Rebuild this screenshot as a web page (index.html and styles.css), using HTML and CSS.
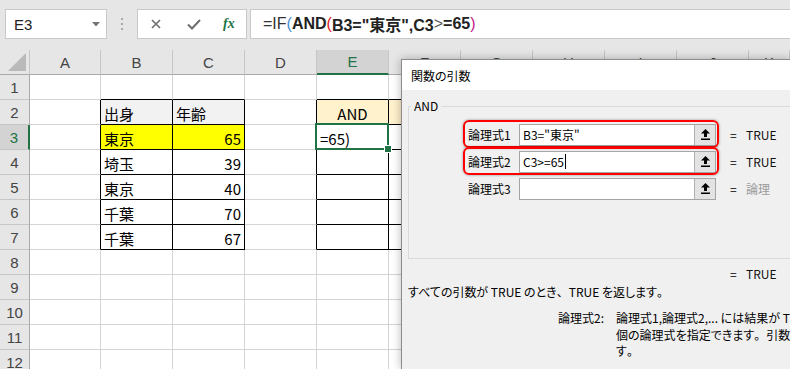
FILE: index.html
```html
<!DOCTYPE html>
<html lang="ja">
<head>
<meta charset="utf-8">
<title>関数の引数</title>
<link rel="stylesheet" href="styles.css">
</head>
<body>
<div class="topbar">
  <div class="namebox"><span>E3</span><svg class="caret" width="8" height="5" viewBox="0 0 8 5"><path d="M0 0H8L4 4.5Z" fill="#767676"/></svg></div>
  <div class="grip"><i></i><i></i><i></i></div>
  <div class="fxbtns">
    <svg class="ico-x" width="10" height="10" viewBox="0 0 10 10"><path d="M1 1L9 9M9 1L1 9" stroke="#6e6e6e" stroke-width="1.6" fill="none"/></svg>
    <svg class="ico-ok" width="14" height="11" viewBox="0 0 14 11"><path d="M1 5.5L5 9.5L13 1" stroke="#6e6e6e" stroke-width="2" fill="none"/></svg>
    <span class="fx">fx</span>
  </div>
  <div class="formula">=IF<span class="p1">(</span><b>AND</b><span class="p2">(</span><b>B3="東京",C3</b><span class="op">&gt;</span><b>=65</b><span class="p3">)</span></div>
</div>

<div class="sheet">
  <div class="c ch corner"><svg width="18" height="18" viewBox="0 0 18 18"><path d="M18 0V18H0Z" fill="#b9b9b9"/></svg></div>
  <div class="c ch">A</div><div class="c ch">B</div><div class="c ch">C</div><div class="c ch">D</div><div class="c ch sel-ch">E</div><div class="c ch">F</div><div class="c ch">G</div><div class="c ch">H</div><div class="c ch">I</div><div class="c ch">J</div><div class="c ch">K</div>

  <div class="c rh">1</div>
  <div class="c"></div><div class="c bb"></div><div class="c bb"></div><div class="c"></div><div class="c bb"></div><div class="c bb"></div><div class="c"></div><div class="c"></div><div class="c"></div><div class="c"></div><div class="c"></div>

  <div class="c rh">2</div>
  <div class="c br"></div><div class="c br bb gh">出身</div><div class="c br bb gh">年齢</div><div class="c br"></div><div class="c br bb or mid">AND</div><div class="c br bb or"></div><div class="c"></div><div class="c"></div><div class="c"></div><div class="c"></div><div class="c"></div>

  <div class="c rh sel-rh">3</div>
  <div class="c br"></div><div class="c br bb yl">東京</div><div class="c br bb yl num">65</div><div class="c br"></div><div class="c br bb active">=65)</div><div class="c br bb"></div><div class="c"></div><div class="c"></div><div class="c"></div><div class="c"></div><div class="c"></div>

  <div class="c rh">4</div>
  <div class="c br"></div><div class="c br bb">埼玉</div><div class="c br bb num">39</div><div class="c br"></div><div class="c br bb"></div><div class="c br bb"></div><div class="c"></div><div class="c"></div><div class="c"></div><div class="c"></div><div class="c"></div>

  <div class="c rh">5</div>
  <div class="c br"></div><div class="c br bb">東京</div><div class="c br bb num">40</div><div class="c br"></div><div class="c br bb"></div><div class="c br bb"></div><div class="c"></div><div class="c"></div><div class="c"></div><div class="c"></div><div class="c"></div>

  <div class="c rh">6</div>
  <div class="c br"></div><div class="c br bb">千葉</div><div class="c br bb num">70</div><div class="c br"></div><div class="c br bb"></div><div class="c br bb"></div><div class="c"></div><div class="c"></div><div class="c"></div><div class="c"></div><div class="c"></div>

  <div class="c rh">7</div>
  <div class="c br"></div><div class="c br bb">千葉</div><div class="c br bb num">67</div><div class="c br"></div><div class="c br bb"></div><div class="c br bb"></div><div class="c"></div><div class="c"></div><div class="c"></div><div class="c"></div><div class="c"></div>

  <div class="c rh">8</div>
  <div class="c"></div><div class="c"></div><div class="c"></div><div class="c"></div><div class="c"></div><div class="c"></div><div class="c"></div><div class="c"></div><div class="c"></div><div class="c"></div><div class="c"></div>
  <div class="c rh">9</div>
  <div class="c"></div><div class="c"></div><div class="c"></div><div class="c"></div><div class="c"></div><div class="c"></div><div class="c"></div><div class="c"></div><div class="c"></div><div class="c"></div><div class="c"></div>
  <div class="c rh">10</div>
  <div class="c"></div><div class="c"></div><div class="c"></div><div class="c"></div><div class="c"></div><div class="c"></div><div class="c"></div><div class="c"></div><div class="c"></div><div class="c"></div><div class="c"></div>
  <div class="c rh">11</div>
  <div class="c"></div><div class="c"></div><div class="c"></div><div class="c"></div><div class="c"></div><div class="c"></div><div class="c"></div><div class="c"></div><div class="c"></div><div class="c"></div><div class="c"></div>
  <div class="c rh">12</div>
  <div class="c"></div><div class="c"></div><div class="c"></div><div class="c"></div><div class="c"></div><div class="c"></div><div class="c"></div><div class="c"></div><div class="c"></div><div class="c"></div><div class="c"></div>
</div>

<div class="dialog">
  <div class="dtitle">関数の引数</div>
  <div class="dbody">
    <fieldset class="group">
      <legend>AND</legend>
      <div class="arg">
        <div class="argbox hl">
          <span class="lbl">論理式1</span>
          <div class="field"><span class="val">B3="東京"</span><span class="ref"><svg width="9" height="11" viewBox="0 0 9 11"><path d="M4.5 0L9 4.5H6V8H3V4.5H0Z" fill="#000"/><rect x="0" y="9.5" width="9" height="1.5" fill="#000"/></svg></span></div>
        </div>
        <span class="eq">=</span><span class="res">TRUE</span>
      </div>
      <div class="arg">
        <div class="argbox hl">
          <span class="lbl">論理式2</span>
          <div class="field"><span class="val">C3&gt;=65<i class="caretline"></i></span><span class="ref"><svg width="9" height="11" viewBox="0 0 9 11"><path d="M4.5 0L9 4.5H6V8H3V4.5H0Z" fill="#000"/><rect x="0" y="9.5" width="9" height="1.5" fill="#000"/></svg></span></div>
        </div>
        <span class="eq">=</span><span class="res">TRUE</span>
      </div>
      <div class="arg">
        <div class="argbox">
          <span class="lbl">論理式3</span>
          <div class="field"><span class="val"></span><span class="ref"><svg width="9" height="11" viewBox="0 0 9 11"><path d="M4.5 0L9 4.5H6V8H3V4.5H0Z" fill="#000"/><rect x="0" y="9.5" width="9" height="1.5" fill="#000"/></svg></span></div>
        </div>
        <span class="eq">=</span><span class="res hint">論理</span>
      </div>
    </fieldset>
    <div class="result"><span class="eq">=</span><span class="res">TRUE</span></div>
    <p class="desc">すべての引数が TRUE のとき<span class="fw">、</span>TRUE を返します<span class="fw">。</span></p>
    <div class="help">
      <span class="hlabel">論理式2:</span>
      <p class="htext">論理式1,論理式2,... には結果が TRUE または FALSE になる<span class="fw">、</span>1 ～ 255<br>個の論理式を指定できます<span class="fw">。</span>引数には論理値<span class="fw">、</span>配列<span class="fw">、</span>または参照を指定しま<br>す<span class="fw">。</span></p>
    </div>
  </div>
</div>
</body>
</html>
```

FILE: styles.css
```css
* { box-sizing: border-box; margin: 0; padding: 0; }
html, body { width: 790px; height: 369px; overflow: hidden; }
body {
  background: #e6e6e6;
  font-family: "Noto Sans CJK JP", sans-serif;
  position: relative;
  color: #000;
}

/* formula bar */
.topbar {
  height: 50px;
  display: flex;
  align-items: flex-start;
  padding: 9px 0 0 5px;
  overflow: hidden;
}
.namebox {
  width: 102px;
  height: 30px;
  background: #fff;
  border: 1px solid #c8c8c8;
  display: flex;
  align-items: center;
  justify-content: space-between;
  padding: 0 6px 0 8px;
  font: 15px "Liberation Sans", sans-serif;
  color: #222;
  flex-shrink: 0;
}
.grip {
  width: 30px;
  height: 30px;
  display: flex;
  flex-direction: column;
  align-items: center;
  justify-content: center;
  gap: 3px;
  flex-shrink: 0;
}
.grip i { width: 2px; height: 2px; background: #a8a8a8; display: block; }
.fxbtns {
  width: 110px;
  height: 30px;
  background: #fff;
  border: 1px solid #c8c8c8;
  display: flex;
  align-items: center;
  padding-left: 13px;
  flex-shrink: 0;
}
.ico-ok { margin-left: 26px; }
.fx {
  margin-left: 22px;
  font: italic bold 14px "Liberation Serif", serif;
  color: #217346;
}
.formula {
  flex: 1;
  margin-left: 3px;
  height: 30px;
  background: #fff;
  border: 1px solid #c8c8c8;
  border-right: none;
  display: flex;
  align-items: center;
  padding-left: 12px;
  font: 16px "Liberation Sans", "Noto Sans CJK JP", sans-serif;
  color: #333;
  white-space: nowrap;
}
.formula b { font-weight: bold; color: #222; }
.formula .p1 { color: #4a8fd4; }
.formula .p2 { color: #e0201b; }
.formula .p3 { color: #c0208a; }
.formula .op { color: #555; }

/* sheet */
.sheet {
  display: grid;
  grid-template-columns: 30px 71px repeat(9, 72px) 41px;
  grid-auto-rows: 25px;
  width: 790px;
  height: 319px;
  overflow: hidden;
  background: #fff;
}
.c {
  border-right: 1px solid #d4d4d4;
  border-bottom: 1px solid #d4d4d4;
  font-size: 15px;
  padding: 2px 3px 0;
  display: flex;
  align-items: center;
  white-space: nowrap;
  position: relative;
  color: #000;
}
.ch {
  background: #e6e6e6;
  border-right-color: #c6c6c6;
  border-bottom-color: #a9a9a9;
  justify-content: center;
  color: #444;
  font: 15px "Liberation Sans", sans-serif;
  padding: 0;
}
.corner { justify-content: flex-end; align-items: flex-end; padding: 0 3px 3px 0; }
.rh {
  background: #e6e6e6;
  border-right-color: #a9a9a9;
  border-bottom-color: #c6c6c6;
  justify-content: center;
  color: #444;
  font: 15px "Liberation Sans", sans-serif;
  padding: 0;
}
.sel-ch { background: #d3d3d3; color: #217346; border-bottom: 2px solid #217346; }
.sel-rh { background: #d3d3d3; color: #217346; border-right: 2px solid #217346; }
.bb { border-bottom-color: #000; }
.br { border-right-color: #000; }
.gh { background: #f2f2f2; }
.yl { background: #ffff00; }
.or { background: #fff2cc; }
.num { justify-content: flex-end; }
.mid { justify-content: center; }
.active::after {
  content: "";
  position: absolute;
  left: -2px; top: -2px; right: -1px; bottom: -1px;
  border: 2px solid #217346;
  z-index: 1;
}
.active::before {
  content: "";
  position: absolute;
  right: -4px; bottom: -4px;
  width: 6px; height: 6px;
  background: #217346;
  border: 1px solid #fff;
  z-index: 2;
}

/* dialog */
.dialog {
  position: absolute;
  left: 401px;
  top: 59px;
  width: 389px;
  height: 310px;
  overflow: hidden;
  background: #f0f0f0;
  border: 1px solid #8c8c8c;
  border-right: none;
  border-bottom: none;
  box-shadow: 0 0 9px rgba(0, 0, 0, 0.28);
  font-size: 12px;
  font-feature-settings: "palt";
  z-index: 5;
}
.fw { font-feature-settings: normal; }
.dtitle {
  height: 30px;
  background: #fff;
  padding-left: 9px;
  display: flex;
  align-items: center;
  font-size: 12px;
}
.dbody { padding: 8px 0 0 6px; }
.group {
  border: 1px solid #dadada;
  border-right: none;
  height: 161px;
  padding: 7px 0 0 0;
  margin: 0;
}
.group legend {
  padding: 0 3px;
  margin-left: 2px;
  font-size: 12px;
  line-height: 16px;
}
.arg { display: flex; align-items: center; height: 27px; margin-left: 59px; }
.argbox { display: flex; align-items: center; position: relative; height: 22px; }
.argbox.hl::after {
  content: "";
  position: absolute;
  left: -5px; right: -3px; top: -4px; bottom: -2px;
  border: 2px solid #ff0000;
  border-radius: 6px;
  box-shadow: 0 0 2px 1px rgba(0, 0, 0, 0.18);
}
.lbl { width: 51px; font-size: 12px; }
.field {
  width: 197px;
  height: 22px;
  background: #fff;
  border: 1px solid #a5a5a5;
  display: flex;
  justify-content: space-between;
  align-items: stretch;
}
.val { padding-left: 3px; display: flex; align-items: center; font-size: 12px; }
.caretline { display: inline-block; width: 1px; height: 15px; background: #000; margin-left: 1px; }
.ref {
  width: 21px;
  background: #e3e3e3;
  border-left: 1px solid #b0b0b0;
  display: flex;
  align-items: center;
  justify-content: center;
}
.eq { margin-left: 14px; width: 16px; font-size: 12px; }
.res { font-size: 12px; color: #111; }
.hint { color: #9a9a9a; }
.result { display: flex; height: 16px; align-items: center; margin-top: 6px; padding-left: 322px; }
.result .eq { margin-left: 0; }
.desc { margin-top: 2px; line-height: 18px; white-space: nowrap; }
.help { display: flex; margin-top: 9px; padding-left: 150px; white-space: nowrap; }
.hlabel { width: 58px; flex-shrink: 0; line-height: 16.5px; }
.htext { line-height: 16.5px; }
```
